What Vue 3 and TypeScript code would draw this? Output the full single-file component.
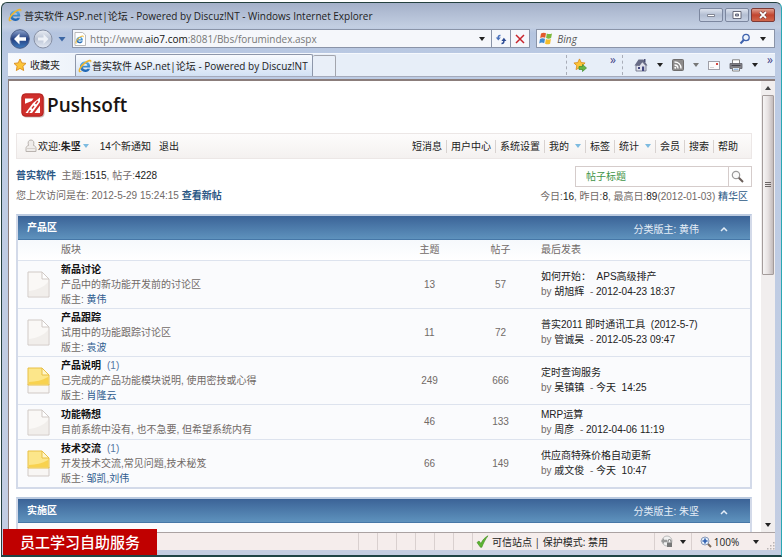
<script setup lang="ts">
import { ref } from 'vue'

interface Forum {
  name: string
  fresh?: string
  desc: string
  mods: string[]
  topics: number
  posts: number
  last: string
  by: string
  when: string
}

const address = ref('forumindex.aspx')
const query = ref('')
const topic = ref('帖子标题')

const menu = [
  { label: '短消息' },
  { label: '用户中心' },
  { label: '系统设置' },
  { label: '我的', drop: true },
  { label: '标签' },
  { label: '统计', drop: true },
  { label: '会员' },
  { label: '搜索' },
  { label: '帮助' },
]

const forums: Forum[] = [
  { name: '新品讨论', desc: '产品中的新功能开发前的讨论区', mods: ['黄伟'], topics: 13, posts: 57, last: '如何开始：  APS高级排产', by: '胡旭辉', when: '2012-04-23 18:37' },
  { name: '产品跟踪', desc: '试用中的功能跟踪讨论区', mods: ['袁波'], topics: 11, posts: 72, last: '普实2011 即时通讯工具  (2012-5-7)', by: '管诚昊', when: '2012-05-23 09:47' },
  { name: '产品说明', fresh: '(1)', desc: '已完成的产品功能模块说明, 使用密技或心得', mods: ['肖隆云'], topics: 249, posts: 666, last: '定时查询服务', by: '吴镇镇', when: '今天  14:25' },
  { name: '功能畅想', desc: '目前系统中没有, 也不急要, 但希望系统内有', mods: [], topics: 46, posts: 133, last: 'MRP运算', by: '周彦', when: '2012-04-06 11:19' },
  { name: '技术交流', fresh: '(1)', desc: '开发技术交流,常见问题,技术秘笈', mods: ['邹凯', '刘伟'], topics: 66, posts: 149, last: '供应商特殊价格自动更新', by: '戚文俊', when: '今天  10:47' },
]
</script>

<template>
  <div class="window">
    <svg class="defs" width="0" height="0" aria-hidden="true">
      <defs>
        <linearGradient id="ieBlue" x1="0" y1="0" x2="0" y2="1">
          <stop offset="0" stop-color="#5cb4ea" /><stop offset="1" stop-color="#1a5fae" />
        </linearGradient>
        <linearGradient id="navBlue" x1="0" y1="0" x2="0" y2="1">
          <stop offset="0" stop-color="#8fa6cf" /><stop offset=".5" stop-color="#233f80" /><stop offset="1" stop-color="#3f7cc0" />
        </linearGradient>
        <linearGradient id="navGrey" x1="0" y1="0" x2="0" y2="1">
          <stop offset="0" stop-color="#e9edf4" /><stop offset=".5" stop-color="#bcc5d6" /><stop offset="1" stop-color="#e4eaf4" />
        </linearGradient>
        <symbol id="ie" viewBox="0 0 14 14">
          <path d="M12.300 8.600H5c.2 1.300 1 2 2.300 2 .9 0 1.500-.3 1.900-.9h2.800c-.8 2.200-2.400 3.200-4.700 3.200C4.200 12.900 2 11 2 7.800s2.200-5.200 5.300-5.200 5.100 2.200 5 6zM5 6.700h4.400C9.200 5.400 8.500 4.700 7.300 4.700S5.300 5.400 5 6.700z" fill="url(#ieBlue)" />
          <path d="M.9 12.900C-.5 11 3 5.500 7.500 2.600c3-2 5.600-2.300 5.900-.9.1.8-.2 1.600-.7 2.400.2-1-.1-1.700-1-1.700-1.300 0-3.400 1.200-5.300 3C3.500 8.100 1.300 11.400 2.200 12c.5.4 1.400.1 2.400-.5-1.500 1.500-3 2.300-3.700 1.400z" fill="#efb632" />
        </symbol>
        <symbol id="star" viewBox="0 0 14 14">
          <path d="M7 1l1.800 3.900 4.200.5-3.100 2.900.8 4.200L7 10.400l-3.700 2.100.8-4.200L1 5.400l4.200-.5z" fill="#fcc53a" stroke="#d98a1b" stroke-width=".9" stroke-linejoin="round" />
        </symbol>
        <symbol id="page" viewBox="0 0 23 27">
          <path d="M1 1h14l7 7v18H1z" fill="#faf8f6" stroke="#d0c9c5" />
          <path d="M2 20c8-1 15-4 19-9v14H2z" fill="#f1eeeb" />
          <path d="M15 1v7h7z" fill="#fff" stroke="#d0c9c5" />
        </symbol>
        <symbol id="pageNew" viewBox="0 0 23 27">
          <path d="M1 17h21v9H1z" fill="#f8f6f4" stroke="#d0c9c5" />
          <path d="M1 1h14l7 7v10H1z" fill="#fce68a" stroke="#e8bf45" />
          <path d="M2 15c7-.5 13-1.500 19-5v7H2z" fill="#f8d24f" />
          <path d="M15 1v7h7z" fill="#fff6cc" stroke="#e8bf45" />
        </symbol>
        <symbol id="collapse" viewBox="0 0 8 6">
          <path d="M1 5l3-3 3 3" fill="none" stroke="#e4edf7" stroke-width="1.500" />
        </symbol>
      </defs>
    </svg>

    <header class="titlebar">
      <svg width="14" height="14"><use href="#ie" /></svg>
      <span class="title">普实软件 ASP.net|论坛 - Powered by Discuz!NT - Windows Internet Explorer</span>
      <div class="controls">
        <button aria-label="最小化"><svg width="10" height="8" viewBox="0 0 10 8"><path d="M1.500 3.500h7v2h-7z" fill="#fff" stroke="#6b6f7d" stroke-width=".8" /></svg></button>
        <button aria-label="最大化"><svg width="10" height="8" viewBox="0 0 10 8"><path d="M1 .5h8v7H1z" fill="#fff" stroke="#5b5f70" stroke-width=".9" /><path d="M3.500 3h3v2h-3z" fill="#aab2c6" stroke="#5b5f70" stroke-width=".9" /></svg></button>
        <button class="close" aria-label="关闭"><svg width="10" height="8" viewBox="0 0 10 8"><path d="M2 1l6 6M8 1L2 7" stroke="#6a3b3b" stroke-width="3" /><path d="M2 1l6 6M8 1L2 7" stroke="#fff" stroke-width="1.800" /></svg></button>
      </div>
    </header>

    <div class="navrow">
      <button class="plain" aria-label="后退">
        <svg width="20" height="20" viewBox="0 0 20 20"><circle cx="10" cy="10" r="9.300" fill="url(#navBlue)" stroke="#4b5d86" /><path d="M9.500 4.500L4 10l5.500 5.500v-3.700H16V8.200H9.500z" fill="#fff" /></svg>
      </button>
      <button class="plain" aria-label="前进">
        <svg width="20" height="20" viewBox="0 0 20 20"><circle cx="10" cy="10" r="9" fill="url(#navGrey)" stroke="#8790a5" /><path d="M10.500 5l5 5-5 5v-3.400H5V8.400h5.500z" fill="#eef1f7" /></svg>
      </button>
      <button class="plain hist" aria-label="历史"><svg width="8" height="6" viewBox="0 0 8 6"><path d="M.5 1h7L4 5.500z" fill="#3b66a4" /></svg></button>
      <div class="address">
        <svg width="14" height="14" viewBox="0 0 14 14"><path d="M2 .5h7.500L12.500 3v10.500H2z" fill="#fff" stroke="#a9a9a9" stroke-width=".8" /><use href="#ie" x="2" y="3" width="9" height="9" /></svg>
        <label class="url" for="url"><span>http://www.<b>aio7.com</b>:8081/Bbs/</span></label>
        <input id="url" v-model="address" class="urlinput" type="text" />
        <button class="plain caret" aria-label="展开地址"><i class="tri"></i></button>
        <button class="plain cell" aria-label="刷新"><svg width="12" height="12" viewBox="0 0 12 12"><path d="M5.500 2.500C3.800 2.300 3.200 3.200 3.200 5" fill="none" stroke="#4a72bb" stroke-width="1.500" /><path d="M.8 4.500h5L3.300 7.500z" fill="#4a72bb" /><path d="M6.500 10.500c1.900.1 2.400-1 2.400-2.800" fill="none" stroke="#2b4a93" stroke-width="1.500" /><path d="M6.400 8h5L8.900 4.800z" fill="#2b4a93" /></svg></button>
        <button class="plain cell" aria-label="停止"><svg width="10" height="10" viewBox="0 0 10 10"><path d="M1 1l8 8M9 1L1 9" stroke="#c8242b" stroke-width="1.500" /></svg></button>
      </div>
      <div class="bing">
        <svg width="14" height="13" viewBox="0 0 14 13"><path d="M2 1.500C4 .3 5.500.5 7 1.200L6.200 5.800C4.500 5 3 5 1.200 6z" fill="#e2592b" /><path d="M7.800 1.500c1.700.8 3.300.8 5.200 0l-.9 4.600c-1.800.8-3.300.8-5 0z" fill="#7cb83c" /><path d="M1 6.900c1.700-1 3.300-.9 5-.2l-.8 4.500c-1.700-.8-3.200-.8-5 .2z" fill="#3f8ad0" /><path d="M6.900 7c1.700.8 3.300.8 5 0l-.8 4.700c-1.800.8-3.300.8-5 0z" fill="#f5bd2c" /></svg>
        <input v-model="query" type="text" placeholder="Bing" aria-label="Bing" />
        <button class="plain" aria-label="搜索"><svg width="12" height="12" viewBox="0 0 12 12"><circle cx="7" cy="4.500" r="3.200" fill="#eef4fc" stroke="#3f63ae" stroke-width="1.300" /><path d="M4.700 7L1.500 10.500" stroke="#3f63ae" stroke-width="2" /></svg></button>
        <button class="plain" aria-label="搜索选项"><i class="tri"></i></button>
      </div>
    </div>

    <div class="tabrow">
      <button class="fav"><svg width="14" height="14"><use href="#star" /></svg>收藏夹</button>
      <button class="tab"><svg width="14" height="14"><use href="#ie" /></svg>普实软件 ASP.net|论坛 - Powered by Discuz!NT</button>
      <button class="newtab" aria-label="新选项卡"></button>
      <div class="tools">
        <button class="plain first" aria-label="添加收藏"><svg width="15" height="14" viewBox="0 0 15 14"><use href="#star" width="13" height="13" /><path d="M6 8.500h3.500V6.500l4 3.500-4 3.500v-2H6z" fill="#67b545" stroke="#3e8c2b" stroke-width=".7" /></svg></button>
        <span class="more">»</span>
        <div class="cmds">
          <button class="plain" aria-label="主页"><svg width="14" height="14" viewBox="0 0 14 14"><path d="M2 7.500V13h10V7.500L8 3.500z" fill="#dfe0ea" stroke="#73768c" stroke-width=".9" /><path d="M.5 7.500L4.500 1.500h5l4 6h-2L8.500 4 5.500 8z" fill="#686c86" /><path d="M10 1h1.500v3H10z" fill="#4b4e75" /><path d="M8 8.500h2.200V13H8z" fill="#43477f" /><path d="M4 9h2v2H4z" fill="#43477f" /></svg></button>
          <button class="plain" aria-label="主页选项"><i class="tri"></i></button>
          <button class="plain" aria-label="源"><svg width="12" height="12" viewBox="0 0 12 12"><rect x=".5" y=".5" width="11" height="11" rx="1" fill="#8d8b8b" stroke="#6f6d6d" /><path d="M2.500 3c3.800 0 6.500 2.700 6.500 6.500M2.500 6c2.200 0 3.500 1.300 3.500 3.500" fill="none" stroke="#fff" stroke-width="1.300" /><circle cx="3.300" cy="8.800" r="1" fill="#fff" /></svg></button>
          <button class="plain" aria-label="源选项"><i class="tri grey"></i></button>
          <button class="plain" aria-label="邮件"><svg width="12" height="9" viewBox="0 0 12 9"><rect x=".5" y=".5" width="11" height="8" fill="#fbfbfb" stroke="#a0a0a8" /><path d="M8 2h2v2H8z" fill="#d5473f" /><path d="M2 6.500h4" stroke="#ccc" stroke-width=".8" /></svg></button>
          <button class="plain" aria-label="打印"><svg width="14" height="13" viewBox="0 0 14 13"><path d="M3.500 5V.8h7V5" fill="#fff" stroke="#777" stroke-width=".9" /><path d="M1 4.500h12v5H1z" fill="#85858c" stroke="#5e5e66" stroke-width=".8" /><path d="M2.500 6.500h9" stroke="#45454d" stroke-width="1.200" /><path d="M3.500 8.500h7V12h-7z" fill="#fff" stroke="#777" stroke-width=".9" /><path d="M4.500 10.200h5" stroke="#6c9ad0" /></svg></button>
          <button class="plain" aria-label="打印选项"><i class="tri"></i></button>
          <span class="more">»</span>
        </div>
      </div>
    </div>

    <div class="viewport">
      <main class="page">
        <h1 class="logo">
          <svg width="24" height="25" viewBox="0 0 24 25"><rect x="1.500" y="2" width="22" height="22.500" rx="4" fill="#c9bdbb" /><rect x=".5" y=".5" width="22" height="23" rx="4" fill="#d02f2b" /><rect x="1" y="1" width="21" height="22" rx="3.500" fill="none" stroke="#b32522" /><path d="M4 5.500h8.500L10.800 8 4 10.800z" fill="#fff" /><path d="M19 4.500V9L11 20H4.500L12 10z" fill="#fff" /><path d="M16.800 8l-2.300 3M13 12.800l-2 2.700M9.500 17.300l-2 2.500" stroke="#d02f2b" stroke-width="1.400" /><path d="M19 12.500V20h-5.500z" fill="#fff" /></svg>
          <span>Pushsoft</span>
        </h1>

        <nav class="userbar">
          <svg width="12" height="14" viewBox="0 0 12 14"><path d="M3.500 6.500C2.500 3 3.500 1 6 1s3.500 2 2.500 5.500c1.700.3 2.500 1.500 2.500 3v3H1v-3c0-1.500.8-2.700 2.500-3z" fill="#efecea" stroke="#b9b3af" /><path d="M1.500 9.500h9" stroke="#d6d1cd" /></svg>
          <span class="hello">欢迎:<b>朱坚</b></span>
          <i class="tri sky"></i>
          <a class="notice" href="#">14个新通知</a>
          <a href="#">退出</a>
          <ul>
            <li v-for="m in menu" :key="m.label"><a href="#">{{ m.label }}</a><i v-if="m.drop" class="tri sky"></i></li>
          </ul>
        </nav>

        <section class="summary">
          <div>
            <p><a class="strong" href="#">普实软件</a>&nbsp; 主题:<em>1515</em>, 帖子:<em>4228</em></p>
            <p>您上次访问是在: 2012-5-29 15:24:15 <a class="strong" href="#">查看新帖</a></p>
          </div>
          <div class="right">
            <form class="find" @submit.prevent>
              <input v-model="topic" type="text" aria-label="帖子标题" />
              <button class="plain" aria-label="搜索帖子"><svg width="13" height="13" viewBox="0 0 13 13"><circle cx="5" cy="5" r="3.700" fill="#fafafa" stroke="#9a9a9a" stroke-width="1.200" /><path d="M7.800 7.800L12 12" stroke="#6b5f5b" stroke-width="2" /></svg></button>
            </form>
            <p>今日:<em>16</em>, 昨日:<em>8</em>, 最高日:<em>89</em>(2012-01-03) <a href="#">精华区</a></p>
          </div>
        </section>

        <section class="board">
          <header>
            <h2>产品区</h2>
            <span>分类版主: 黄伟</span>
            <button class="plain" aria-label="收起产品区"><svg width="8" height="6"><use href="#collapse" /></svg></button>
          </header>
          <table>
            <colgroup><col class="c-icon" /><col /><col class="c-num" /><col class="c-num" /><col class="c-last" /></colgroup>
            <thead>
              <tr><th></th><th>版块</th><th class="num">主题</th><th class="num">帖子</th><th class="last">最后发表</th></tr>
            </thead>
            <tbody>
              <tr v-for="f in forums" :key="f.name">
                <td class="icon"><svg width="23" height="27"><use :href="f.fresh ? '#pageNew' : '#page'" /></svg></td>
                <td>
                  <a class="name" href="#">{{ f.name }}</a><span v-if="f.fresh" class="fresh">{{ f.fresh }}</span>
                  <p>{{ f.desc }}</p>
                  <p v-if="f.mods.length">版主: <template v-for="(m, i) in f.mods" :key="m"><template v-if="i">,</template><a class="mod" href="#">{{ m }}</a></template></p>
                </td>
                <td class="num">{{ f.topics }}</td>
                <td class="num">{{ f.posts }}</td>
                <td class="last">
                  <p><a href="#">{{ f.last }}</a></p>
                  <p>by <a href="#">{{ f.by }}</a>&nbsp; - <span class="when">{{ f.when }}</span></p>
                </td>
              </tr>
            </tbody>
          </table>
        </section>

        <section class="board">
          <header>
            <h2>实施区</h2>
            <span>分类版主: 朱坚</span>
            <button class="plain" aria-label="收起实施区"><svg width="8" height="6"><use href="#collapse" /></svg></button>
          </header>
          <div class="rest"></div>
        </section>
      </main>

      <div class="scroll" aria-hidden="true">
        <i class="tri up"></i>
        <div class="track"><div class="thumb"><i></i><i></i><i></i></div></div>
        <i class="tri"></i>
      </div>
    </div>

    <footer class="status">
      <span v-for="n in 6" :key="n" class="slot"></span>
      <div class="zone">
        <svg width="13" height="13" viewBox="0 0 13 13"><path d="M1 7.500l2-1.500 2 2.500C6.500 5 8.700 2.500 12 .8 9.500 4 7.500 8 5.800 12.300H4.500z" fill="#5cb531" stroke="#3e8a1e" stroke-width=".6" /></svg>
        可信站点 | 保护模式: 禁用
      </div>
      <button class="plain priv" aria-label="隐私"><svg width="14" height="13" viewBox="0 0 14 13"><circle cx="7" cy="6" r="5" fill="#f1f1f1" stroke="#bbb" /><path d="M1 6l3-3v1.800h3v2.400H4V9z" fill="#999" /><path d="M7 7.500h5V12H7z" fill="#777" /><path d="M8 7.500V6a1.500 1.500 0 013 0v1.500" fill="none" stroke="#777" /></svg><i class="tri"></i></button>
      <button class="plain zoom"><svg width="12" height="12" viewBox="0 0 12 12"><circle cx="5" cy="5" r="4" fill="#e4effb" stroke="#8a9ab8" /><path d="M5 2.500v5M2.500 5h5" stroke="#2c5cae" stroke-width="1.600" /><path d="M8 8l3 3" stroke="#7d6a5a" stroke-width="2" /></svg><span>100%</span><i class="tri"></i></button>
      <svg class="grip" width="8" height="8" viewBox="0 0 8 8"><path d="M6 0h1.500v1.500H6zM6 3h1.500v1.500H6zM3 3h1.500v1.500H3zM6 6h1.500v1.500H6zM3 6h1.500v1.500H3zM0 6h1.500v1.500H0z" fill="#b9b4b4" /></svg>
    </footer>

    <div class="badge">员工学习自助服务</div>
  </div>
</template>

<style>
body {
  background: #fff;
}
</style>

<style scoped>
* {
  box-sizing: border-box;
}
.window {
  position: relative;
  display: flex;
  flex-direction: column;
  height: calc(100vh - 2px);
  margin: 2px 1px 0 1px;
  padding: 0 6px;
  border: 1px solid #24403f;
  border-right-color: #2aa7b3;
  border-bottom: 2px solid #1f4446;
  border-radius: 6px 6px 0 0;
  background: linear-gradient(#a4b0c9, #c3cfe2 24px, #b4c4df 30px, #bccbe4 60px, #c3cde2);
  font: 10px/14px "Open Sans", "Noto Sans CJK SC", sans-serif;
  color: #222;
}
.defs {
  position: absolute;
}
svg {
  display: block;
  flex: none;
}
p, h1, h2, ul {
  margin: 0;
  padding: 0;
}
a {
  color: inherit;
  text-decoration: none;
}
em {
  font-style: normal;
  color: #222;
}
button, input {
  font: inherit;
  color: inherit;
}
input {
  min-width: 0;
  padding: 0;
  border: 0;
  outline: 0;
  background: none;
}
.plain {
  display: flex;
  align-items: center;
  justify-content: center;
  padding: 0;
  border: 0;
  background: none;
}
.tri {
  flex: none;
  border: 3px solid transparent;
  border-top: 4px solid #222;
  border-bottom: 0;
}
.tri.grey {
  border-top-color: #777;
}
.tri.sky {
  border-top-color: #7dbbe0;
}
.tri.up {
  border-top: 0;
  border-bottom: 4px solid #444;
}

.titlebar {
  display: flex;
  align-items: center;
  gap: 2px;
  height: 24px;
}
.title {
  flex: 1;
  padding-top: 2px;
  white-space: nowrap;
  overflow: hidden;
}
.controls {
  display: flex;
  gap: 2px;
}
.controls button {
  display: flex;
  align-items: center;
  justify-content: center;
  width: 24px;
  height: 14px;
  padding: 0;
  border: 1px solid #7c879f;
  border-radius: 2px;
  background: linear-gradient(#dde3ee, #b3bed2 50%, #c6d0e2);
}
.controls .close {
  border-color: #7d3a36;
  background: linear-gradient(#e0a090, #c2452f 50%, #d0674c);
}

.navrow {
  display: flex;
  align-items: center;
  height: 23px;
  padding-left: 2px;
  gap: 3px;
}
.hist {
  width: 12px;
}
.address, .bing {
  display: flex;
  align-items: center;
  height: 19px;
  border: 1px solid #8a94a8;
  background: #f5f7fb;
}
.address {
  flex: 461;
  margin-left: 1px;
}
.url {
  padding-left: 3px;
  color: #777;
  white-space: nowrap;
}
.url b {
  font-weight: 400;
  color: #111;
}
.urlinput {
  flex: 1;
  color: #777;
}
.caret {
  width: 18px;
}
.cell {
  width: 19px;
  height: 17px;
  border-left: 1px solid #8a94a8;
}
.bing {
  flex: 236;
  margin-left: 3px;
  padding: 0 4px 0 2px;
  gap: 4px;
}
.bing {
  flex-grow: 233;
}
.bing input {
  flex: 1;
  font-style: italic;
}
.bing input::placeholder {
  color: #555;
  opacity: 1;
}
.bing button {
  width: 14px;
}

.tabrow {
  display: flex;
  align-items: stretch;
  height: 24px;
  margin-top: 3px;
  border-top: 1px solid #f5f8fd;
  border-bottom: 1px solid #a5aabb;
  background: #e7eef8;
}
.fav, .tab {
  display: flex;
  align-items: center;
  padding: 0 4px 0 5px;
  border: 0;
  white-space: nowrap;
}
.fav {
  gap: 3px;
  width: 67px;
  background: linear-gradient(90deg, #f8fafd, #eef3fa);
}
.tab {
  width: 238px;
  padding: 0 3px 0 2px;
  border: 1px solid #8e97aa;
  border-bottom: 0;
  border-radius: 2px 2px 0 0;
  background: linear-gradient(#f9fbfe, #d2e1f4);
}
.newtab {
  width: 23px;
  margin: 1px 0 0;
  border: 1px solid #a3a5ad;
  border-bottom: 0;
  border-left: 0;
  border-radius: 2px 2px 0 0;
  background: #e9eff8;
}
.tools, .cmds {
  display: flex;
  align-items: center;
}
.tools {
  margin-left: auto;
}
.first {
  height: 20px;
  padding: 0 22px 0 6px;
  border-left: 1px dashed #a9adb8;
}
.more {
  padding-bottom: 10px;
  font-size: 12px;
  color: #3f3f86;
}
.cmds {
  height: 20px;
  margin-left: 6px;
  padding: 0 2px 0 11px;
  gap: 9px;
  border-left: 1px dashed #a9adb8;
}

.viewport {
  display: flex;
  flex: 1;
  min-height: 0;
  margin-top: 2px;
  border-top: 2px solid #8b7d7b;
  border-left: 1px solid #8b7d7b;
  background: #fff;
}
.page {
  flex: 1;
  min-width: 0;
  overflow: hidden;
  padding: 0 9px 0 7px;
  font-family: "Liberation Sans", "Noto Sans CJK SC", sans-serif;
  line-height: 15px;
  color: #716a67;
}
.logo {
  display: flex;
  align-items: center;
  gap: 2px;
  padding: 11px 5px 0;
  font: 600 19px/26px "Open Sans", sans-serif;
  color: #1a1413;
}
.userbar {
  display: flex;
  align-items: center;
  height: 26px;
  margin-top: 15px;
  padding: 0 13px 0 8px;
  border: 1px solid #ece7e6;
  background: linear-gradient(#fdfcfc, #f4f1f0);
  color: #222;
}
.hello {
  padding: 0 2px 0 1px;
}
.notice {
  margin: 0 8px 0 11px;
}
.userbar ul {
  display: flex;
  margin-left: auto;
  list-style: none;
}
.userbar li {
  display: flex;
  align-items: center;
  gap: 6px;
  padding: 0 4px;
  line-height: 13px;
  border-left: 1px solid #d8d2d0;
}
.userbar li:first-child {
  border-left: 0;
}
.userbar li:last-child {
  padding-right: 0;
}
.summary {
  display: flex;
  justify-content: space-between;
  padding: 7px 0 8px;
  line-height: 20px;
}
.summary a {
  color: #2c5885;
}
.strong {
  font-weight: 700;
}
.right p {
  padding-right: 4px;
  line-height: 19px;
  text-align: right;
}
.right {
  display: flex;
  flex-direction: column;
  align-items: flex-end;
}
.find {
  display: flex;
  width: 177px;
  height: 21px;
  border: 1px solid #d5cccb;
}
.find input {
  flex: 1;
  padding-left: 10px;
  color: #3f9448;
}
.find button {
  width: 23px;
  padding-right: 6px;
  border-left: 1px solid #d5cccb;
}

.board {
  margin-bottom: 8px;
  border: 2px solid #d3dae9;
  border-top-color: #bccbe0;
}
.board header {
  display: flex;
  align-items: center;
  height: 24px;
  padding: 0 22px 0 9px;
  background: linear-gradient(#3b6397, #5e92bd);
  border-bottom: 1px solid #4677a7;
  color: #fff;
}
.board h2 {
  flex: 1;
  font-size: 10px;
}
.board header span {
  padding: 3px 21px 0 0;
  color: #e6eef7;
}
.board header button {
  padding-top: 3px;
}
table {
  width: 100%;
  table-layout: fixed;
  border-collapse: collapse;
}
.c-icon {
  width: 43px;
}
.c-num {
  width: 71px;
}
.c-last {
  width: 214px;
}
th {
  height: 20px;
  padding: 0;
  font-weight: 400;
  text-align: left;
  background: linear-gradient(#f6f9fc, #fff);
}
td {
  padding: 1px 0;
  border-top: 1px solid #dde3ee;
  background: #fafbfd;
}
td.icon {
  padding: 4px 9px 3px;
}
th.num, td.num {
  text-align: center;
}
th.last, td.last {
  padding-left: 5px;
}
.name {
  font-weight: 700;
  color: #111;
}
.fresh {
  margin-left: 6px;
  color: #5376a3;
}
.mod {
  color: #2f5d8f;
}
.last p {
  white-space: pre;
}
.last a, .when {
  color: #222;
}
.rest {
  height: 60px;
  background: #fafbfd;
}

.scroll {
  display: flex;
  flex-direction: column;
  align-items: center;
  justify-content: space-between;
  width: 14px;
  padding: 5px 0;
  background: #f1eeee;
}
.track {
  flex: 1;
  align-self: stretch;
  padding: 5px 1px 0;
}
.thumb {
  display: flex;
  flex-direction: column;
  align-items: center;
  justify-content: center;
  gap: 1px;
  height: 42%;
  border: 1px solid #a49c9b;
  border-radius: 1px;
  background: linear-gradient(90deg, #f7f5f5, #e6e1e1 50%, #c3bbbb);
}
.thumb i {
  width: 6px;
  height: 1px;
  background: #6d6766;
}

.status {
  display: flex;
  align-items: stretch;
  justify-content: flex-end;
  height: 18px;
  margin-bottom: 5px;
  border-top: 1px solid #aaa2a2;
  background: #f5edec;
}
.slot {
  width: 19px;
  border-left: 1px solid #d9d0cf;
}
.zone {
  display: flex;
  align-items: center;
  gap: 3px;
  width: 182px;
  padding-left: 3px;
  border-left: 1px solid #d9d0cf;
}
.status button {
  border-left: 1px solid #d9d0cf;
}
.priv {
  width: 37px;
  gap: 6px;
}
.zoom {
  width: 76px;
  gap: 2px;
}
.zoom .tri {
  margin-left: 12px;
}
.grip {
  align-self: flex-end;
}
.badge {
  position: absolute;
  left: 1px;
  bottom: 0;
  padding: 0 17px;
  background: #c00000;
  color: #fff;
  font: 500 15px/26px "Noto Sans CJK SC", sans-serif;
}
</style>
